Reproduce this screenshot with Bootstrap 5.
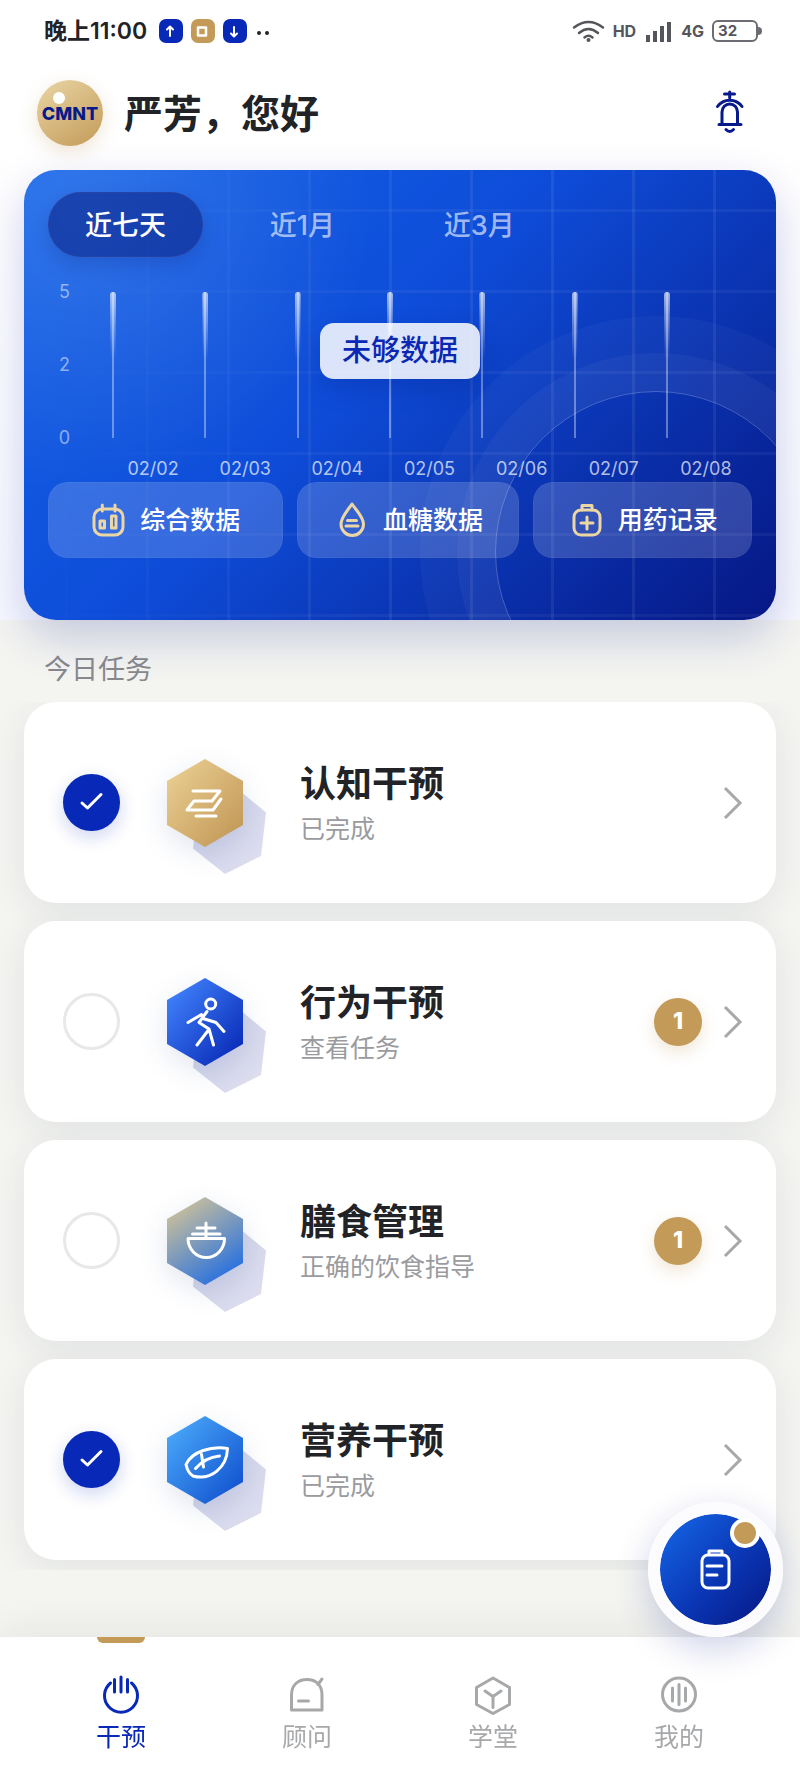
<!DOCTYPE html>
<html lang="zh-CN">
<head>
  <meta charset="UTF-8">
  <meta name="viewport" content="width=device-width, initial-scale=1.0">
  <title>干预</title>
  <link href="https://cdn.jsdelivr.net/npm/bootstrap@5.3.3/dist/css/bootstrap.min.css" rel="stylesheet">
  <script src="https://cdn.jsdelivr.net/npm/bootstrap@5.3.3/dist/js/bootstrap.bundle.min.js"></script>
  <style>
    :root { --ink: #222327; --blue: #0828b8; --navy: #071a8c; --gold: #c39a58; --grey: #a7a8aa; }
    body { background-color: #f4f5f1; color: var(--ink); font-family: Inter, "Noto Sans CJK SC", sans-serif; padding-bottom: 210px; }
    svg { display: block; flex: none; overflow: visible; fill: none; stroke: currentColor; stroke-width: 3; stroke-linecap: round; stroke-linejoin: round; }

    .top-area { background: linear-gradient(#fff 20%, #f7f8ff); }
    .status { height: 62px; padding: 0 38px 0 44px; }
    .status-time { font-size: 23px; font-weight: 600; }
    .status-app { width: 24px; height: 24px; border-radius: 7px; background: var(--blue); color: #fff; }
    .status-app.gold { background: var(--gold); }
    .status-right { color: #55565c; font-size: 16px; font-weight: 700; }
    .battery { position: relative; width: 46px; height: 22px; border: 2px solid #6b6c72; border-radius: 6px; font-size: 15px; line-height: 18px; padding-left: 4px; margin-right: 4px; }
    .battery::after { content: ""; position: absolute; right: -6px; top: 5px; width: 4px; height: 8px; border-radius: 0 4px 4px 0; background: #6b6c72; }

    .hello { padding: 18px 50px 24px 37px; }
    .avatar { position: relative; width: 66px; height: 66px; background: linear-gradient(145deg, #e9d6a5, #c39a58); color: var(--navy); font-size: 18px; font-weight: 800; box-shadow: 0 6px 18px rgba(195, 154, 88, .25); }
    .avatar::before { content: ""; position: absolute; left: 16px; top: 12px; width: 12px; height: 12px; border-radius: 50%; background: #fff; }
    .avatar span { position: relative; }
    .hello-name { font-size: 39px; font-weight: 600; line-height: 64px; padding-top: 2px; margin-left: 21px; }
    .bell { color: var(--navy); }

    .hero-wrap, .task-list { padding-left: 24px; padding-right: 24px; }
    .hero { position: relative; z-index: 1; border-radius: 32px; padding: 22px 24px 62px; color: #fff;
      background: radial-gradient(circle at 8% 8%, rgba(255, 255, 255, .13), transparent 36%), linear-gradient(135deg, #1464e8 0%, #0e4cd8 45%, #061784 100%);
      box-shadow: 0 18px 45px rgba(8, 26, 140, .2); }
    .hero-art { position: absolute; inset: 0; overflow: hidden; border-radius: 32px; }
    .hero-grid { position: absolute; inset: 0;
      background: linear-gradient(90deg, rgba(255, 255, 255, .07) 3px, transparent 3px) 41px 0 / 81px 81px, linear-gradient(rgba(255, 255, 255, .05) 3px, transparent 3px) 0 39px / 81px 81px;
      -webkit-mask-image: linear-gradient(100deg, transparent 8%, #000 50%); mask-image: linear-gradient(100deg, transparent 8%, #000 50%); }
    .hero-ring { position: absolute; right: -41px; bottom: -93px; width: 322px; height: 322px; border-radius: 50%; border: 1px solid rgba(255, 255, 255, .25); box-shadow: 0 0 0 38px rgba(255, 255, 255, .04), 0 0 0 75px rgba(255, 255, 255, .03); }
    .hero-body { position: relative; }
    .ranges { gap: 22px; }
    .range-btn { flex: 0 0 22%; height: 65px; padding: 2px 0 0; border: 1px solid transparent; border-radius: 33px; background: none; color: rgba(255, 255, 255, .62); font-size: 27px; font-weight: 500; line-height: 60px; }
    .range-btn.active { background: rgba(14, 42, 144, .66); border-color: rgba(60, 70, 150, .4); color: #fff; box-shadow: 0 8px 20px rgba(5, 20, 110, .2); }

    .chart { position: relative; padding: 35px 82px 0 8px; }
    .y-axis { width: 14px; margin: -13px 40px -13px 0; font-size: 18px; line-height: 26px; color: rgba(255, 255, 255, .5); text-align: right; }
    .stems { height: 146px; }
    .stem { position: relative; width: 6px; background: linear-gradient(rgba(255, 255, 255, .36), rgba(255, 255, 255, .36)) center / 2px 100% no-repeat; }
    .stem::before { content: ""; position: absolute; inset: 0 0 auto; height: 68px; border-radius: 3px 3px 0 0; background: linear-gradient(rgba(255, 255, 255, .62), transparent); clip-path: polygon(0 0, 100% 0, 90% 100%, 10% 100%); }
    .no-data { position: absolute; left: 50%; top: 66px; transform: translateX(-50%); border-radius: 14px; padding: 0 22px; background: rgba(255, 255, 255, .85); color: #0a28b4; font-size: 29px; font-weight: 500; line-height: 56px; white-space: nowrap; box-shadow: 0 10px 25px rgba(5, 20, 110, .2); }
    .dates { margin: 18px 0 0 59px; font-size: 18px; line-height: 26px; color: rgba(255, 255, 255, .7); text-align: center; }
    .quick { display: grid; grid-template-columns: 235fr 223fr 219fr; gap: 14px; }
    .quick-btn { height: 76px; gap: 12px; border: 1px solid rgba(255, 255, 255, .2); border-radius: 20px; background: rgba(255, 255, 255, .17); background-clip: padding-box; color: #fff; font-size: 25px; font-weight: 500; padding: 2px 0 0; }
    .quick-btn svg { color: #ecd6a4; }

    .section-name { padding: 30px 44px 0; height: 82px; font-size: 27px; font-weight: 400; line-height: 40px; color: #88898d; }
    .task-list { overflow: hidden; padding-bottom: 10px; gap: 18px; }
    .task { height: 201px; border: 0; border-radius: 32px; padding: 0 33px 0 39px; box-shadow: 0 8px 36px rgba(40, 50, 100, .09); }
    .task-check.form-check-input { width: 57px; height: 57px; margin: 0 40px 0 0; border: 3px solid #e7e8e9; border-radius: 50%; background-size: 58px 58px; background-position: center; flex: none; }
    .task-check.form-check-input:checked { border-color: var(--blue); background-color: var(--blue); box-shadow: 0 6px 18px rgba(8, 40, 184, .2);
      background-image: url("data:image/svg+xml,%3Csvg xmlns='http://www.w3.org/2000/svg' viewBox='0 0 58 58'%3E%3Cpath d='M19.5 29.5l5.5 5 13.5-13.5' fill='none' stroke='%23fff' stroke-width='3' stroke-linecap='round' stroke-linejoin='round'/%3E%3C/svg%3E"); }
    .task-tile { margin-right: 50px; color: #fff; }
    .task-tile .hex { stroke: none; filter: drop-shadow(0 8px 14px rgba(8, 40, 120, .12)); }
    .task-tile .back { stroke: none; fill: url(#backFill); }
    .task-text { padding-top: 2px; }
    .task-title { display: block; font-size: 36px; font-weight: 600; line-height: 50px; }
    .task-note { font-size: 25px; font-weight: 400; line-height: 40px; color: #9a9b9e; }
    .task-count { width: 48px; height: 48px; background: var(--gold); color: #fff; font-size: 23px; font-weight: 800; box-shadow: 0 6px 16px rgba(195, 154, 88, .25); }
    .task-go { color: var(--grey); margin-left: 21px; }
    .task-go svg { stroke-linecap: butt; stroke-linejoin: miter; }

    .fab { position: fixed; right: 17px; bottom: 143px; z-index: 1040; width: 135px; height: 135px; border: 12px solid #fcfcfe; border-radius: 50%; padding: 0; color: #fff; background: linear-gradient(135deg, #1464e4 5%, #0a36b4 55%, #061784 100%) padding-box; box-shadow: 0 12px 36px rgba(8, 26, 140, .2); }
    .fab-dot { position: absolute; right: 11px; top: 4px; width: 30px; height: 30px; border: 4px solid #fff; border-radius: 50%; background: var(--gold); }

    .tabs { background: #fff; padding: 0 28px; box-shadow: 0 -10px 36px rgba(30, 30, 40, .06); }
    .tab-item { position: relative; flex: 1 1 0; padding: 37px 0 25px; color: var(--grey); font-size: 25px; font-weight: 400; line-height: 36px; text-align: center; text-decoration: none; }
    .tab-item svg { margin: 0 auto 3px; }
    .tab-item.active { color: var(--blue); }
    .tab-item.active::before { content: ""; position: absolute; left: 50%; top: 0; width: 48px; height: 6px; margin-left: -24px; border-radius: 0 0 6px 6px; background: var(--gold); }
  </style>
</head>
<body>
  <!-- shared gradients -->
  <svg width="0" height="0" class="position-absolute" aria-hidden="true">
    <defs>
      <linearGradient id="backFill" x1="0" y1="0" x2="1" y2="1"><stop offset="0" stop-color="#ccd2e8"/><stop offset="1" stop-color="#e0dff0"/></linearGradient>
      <linearGradient id="goldFill" x1="0" y1="0" x2="1" y2="1"><stop offset=".1" stop-color="#e8cc90"/><stop offset=".9" stop-color="#c39a58"/></linearGradient>
      <linearGradient id="blueFill" x1="0" y1="0" x2="1" y2="1"><stop offset=".1" stop-color="#3f80fa"/><stop offset=".9" stop-color="#0a2cb8"/></linearGradient>
      <linearGradient id="mixFill" x1=".2" y1="0" x2=".8" y2="1"><stop offset=".05" stop-color="#c9bf9c"/><stop offset=".9" stop-color="#2f74dc"/></linearGradient>
      <linearGradient id="skyFill" x1="0" y1="0" x2="1" y2="1"><stop offset=".1" stop-color="#48a6f8"/><stop offset=".9" stop-color="#1254d0"/></linearGradient>
    </defs>
  </svg>

  <div class="top-area">
    <div class="status d-flex align-items-center justify-content-between">
      <div class="d-flex align-items-center gap-2">
        <span class="status-time me-1">晚上11:00</span>
        <span class="status-app"><svg width="24" height="24"><path d="M11 17V8M8 10.500l3-3 3 3" stroke-width="2"/></svg></span>
        <span class="status-app gold"><svg width="24" height="24"><rect x="7" y="8.500" width="8" height="8" stroke-width="2.500"/></svg></span>
        <span class="status-app"><svg width="24" height="24"><path d="M11 8v9M8 14.500l3 3 3-3" stroke-width="2"/></svg></span>
        <svg width="16" height="24"><circle cx="4" cy="14" r="2" fill="#222327" stroke="none"/><circle cx="12" cy="14" r="2" fill="#222327" stroke="none"/></svg>
      </div>
      <div class="status-right d-flex align-items-center">
        <svg class="me-2" width="33" height="24"><path d="M2 8.500q14.500-11 29 0M7 14q9.500-8 19 0M12.500 18.500q4-3.500 8 0" stroke-width="2.500"/><circle cx="16.500" cy="21" r="2" fill="#55565c" stroke="none"/></svg>
        <span>HD</span>
        <svg class="mx-2" width="29" height="24"><path d="M4 23v-7M11 23V12M18 23V7M25 23V3" stroke-width="4" stroke-linecap="butt"/></svg>
        <span class="me-2">4G</span>
        <span class="battery">32</span>
      </div>
    </div>

    <header class="hello d-flex align-items-center">
      <div class="avatar rounded-circle d-flex align-items-center justify-content-center"><span>CMNT</span></div>
      <h1 class="hello-name mb-0 me-auto">严芳，您好</h1>
      <button class="btn p-0 border-0 bell" type="button" aria-label="通知">
        <svg width="40" height="50"><path d="M14.500 6h10M19.700 4V10M7.500 18.500A15 15 0 0 1 32 18.500M12 36V24a7.700 8 0 0 1 15.500 0v12M9 36.500h22M16 41.500q3.700 4 7.500 0"/></svg>
      </button>
    </header>

    <div class="hero-wrap">
      <section class="hero">
        <div class="hero-art"><div class="hero-grid"></div><div class="hero-ring"></div></div>
        <div class="hero-body">
          <div class="ranges d-flex">
            <button class="range-btn active" type="button">近七天</button>
            <button class="range-btn" type="button">近1月</button>
            <button class="range-btn" type="button">近3月</button>
          </div>
          <div class="chart d-flex">
            <div class="y-axis d-flex flex-column justify-content-between"><span>5</span><span>2</span><span>0</span></div>
            <div class="stems d-flex justify-content-between flex-grow-1">
              <i class="stem"></i><i class="stem"></i><i class="stem"></i><i class="stem"></i><i class="stem"></i><i class="stem"></i><i class="stem"></i>
            </div>
            <div class="no-data">未够数据</div>
          </div>
          <div class="dates d-flex">
            <span class="col">02/02</span><span class="col">02/03</span><span class="col">02/04</span><span class="col">02/05</span><span class="col">02/06</span><span class="col">02/07</span><span class="col">02/08</span>
          </div>
          <div class="quick">
            <button class="quick-btn d-flex align-items-center justify-content-center" type="button">
              <svg width="38" height="38"><rect x="4" y="7" width="29" height="26" rx="8"/><path d="M12.300 3v6M25 3v6"/><rect x="10" y="19" width="4.500" height="7"/><rect x="21.500" y="14" width="4.500" height="12"/></svg>
              综合数据
            </button>
            <button class="quick-btn d-flex align-items-center justify-content-center" type="button">
              <svg width="38" height="38"><path d="M19 2C15 8 8 15 8 22a11.200 11.500 0 0 0 22.500 0C30.500 15 23 8 19 2zM14.500 18.500h9M13 24h12"/></svg>
              血糖数据
            </button>
            <button class="quick-btn d-flex align-items-center justify-content-center" type="button">
              <svg width="38" height="38"><rect x="6" y="8" width="26" height="25" rx="7"/><path d="M14 8V3.500h10V8M19 15v12M13 21h12"/></svg>
              用药记录
            </button>
          </div>
        </div>
      </section>
    </div>
  </div>

  <h2 class="section-name mb-0">今日任务</h2>

  <main class="task-list d-flex flex-column">
    <article class="task card flex-row align-items-center">
      <input class="task-check form-check-input" type="checkbox" id="task1" checked>
      <svg class="task-tile" width="90" height="106">
        <path class="back" d="M106 62.500 101 106 65 124 33 98.500 38 54 74 36z"/>
        <path class="hex" fill="url(#goldFill)" d="M45 9 83 31V75L45 97 7 75V31z"/>
        <path d="M33 41H60L52 51H34L27 60H53L61 49M36 66H56"/>
      </svg>
      <div class="task-text me-auto"><label class="task-title" for="task1">认知干预</label><div class="task-note">已完成</div></div>
      <a class="task-go" href="#" aria-label="认知干预"><svg width="20" height="34"><path d="M2 2 17 17 2 32"/></svg></a>
    </article>

    <article class="task card flex-row align-items-center">
      <input class="task-check form-check-input" type="checkbox" id="task2">
      <svg class="task-tile" width="90" height="106">
        <path class="back" d="M106 62.500 101 106 65 124 33 98.500 38 54 74 36z"/>
        <path class="hex" fill="url(#blueFill)" d="M45 9 83 31V75L45 97 7 75V31z"/>
        <circle cx="50.700" cy="35" r="5"/>
        <path d="M47 42.500 39 53.500 49 60 53.500 76M48.500 61 37 76M28 53.500 41.500 45.500M43 49.500 56 53.500 64 62.500"/>
      </svg>
      <div class="task-text me-auto"><label class="task-title" for="task2">行为干预</label><div class="task-note">查看任务</div></div>
      <span class="task-count rounded-circle d-flex align-items-center justify-content-center">1</span>
      <a class="task-go" href="#" aria-label="行为干预"><svg width="20" height="34"><path d="M2 2 17 17 2 32"/></svg></a>
    </article>

    <article class="task card flex-row align-items-center">
      <input class="task-check form-check-input" type="checkbox" id="task3">
      <svg class="task-tile" width="90" height="106">
        <path class="back" d="M106 62.500 101 106 65 124 33 98.500 38 54 74 36z"/>
        <path class="hex" fill="url(#mixFill)" d="M45 9 83 31V75L45 97 7 75V31z"/>
        <path d="M28 50.500H64.500A18.200 19 0 0 1 28 50.500zM32.500 46H60M37 40H55M46 35V50"/>
      </svg>
      <div class="task-text me-auto"><label class="task-title" for="task3">膳食管理</label><div class="task-note">正确的饮食指导</div></div>
      <span class="task-count rounded-circle d-flex align-items-center justify-content-center">1</span>
      <a class="task-go" href="#" aria-label="膳食管理"><svg width="20" height="34"><path d="M2 2 17 17 2 32"/></svg></a>
    </article>

    <article class="task card flex-row align-items-center">
      <input class="task-check form-check-input" type="checkbox" id="task4" checked>
      <svg class="task-tile" width="90" height="106">
        <path class="back" d="M106 62.500 101 106 65 124 33 98.500 38 54 74 36z"/>
        <path class="hex" fill="url(#skyFill)" d="M45 9 83 31V75L45 97 7 75V31z"/>
        <path d="M67.500 41.500C52 39 32 44 26 57.500c1 5 3 9 7 11.500C51 74 67 60 67.500 41.500zM35.500 61.500C42 54 50 50 59.500 49M41.500 47.500 43.500 60"/>
      </svg>
      <div class="task-text me-auto"><label class="task-title" for="task4">营养干预</label><div class="task-note">已完成</div></div>
      <a class="task-go" href="#" aria-label="营养干预"><svg width="20" height="34"><path d="M2 2 17 17 2 32"/></svg></a>
    </article>
  </main>

  <button class="fab d-flex align-items-center justify-content-center" type="button" aria-label="记录">
    <svg width="40" height="44"><rect x="6" y="7" width="27" height="33" rx="6"/><path d="M13 6.500V3h13v3.500M11 18h15M11 27h10"/></svg>
    <span class="fab-dot"></span>
  </button>

  <nav class="tabs fixed-bottom d-flex">
    <a class="tab-item active" href="#">
      <svg width="42" height="42"><path d="M10.500 9a16.500 16.500 0 1 0 21 0M14.500 5.500V18M21 3V18M27.500 5.500V18"/></svg>
      干预
    </a>
    <a class="tab-item" href="#">
      <svg width="42" height="42"><path d="M5.500 36V21C5.500 11 12 5.500 21 5.500S36 11 36 21V36zM32 10.500 36 5M12.500 27h10"/></svg>
      顾问
    </a>
    <a class="tab-item" href="#">
      <svg width="42" height="42"><path d="M21 4 37.500 13.500V30.500L21 39.500 4.500 30.500V13.500zM13 17 21 22.500 29 17M21 22.500V33.500"/></svg>
      学堂
    </a>
    <a class="tab-item" href="#">
      <svg width="42" height="42"><circle cx="21" cy="20.500" r="16.500"/><path d="M14.500 14V27M21 10.500V30.500M27.500 14V27"/></svg>
      我的
    </a>
  </nav>
</body>
</html>
